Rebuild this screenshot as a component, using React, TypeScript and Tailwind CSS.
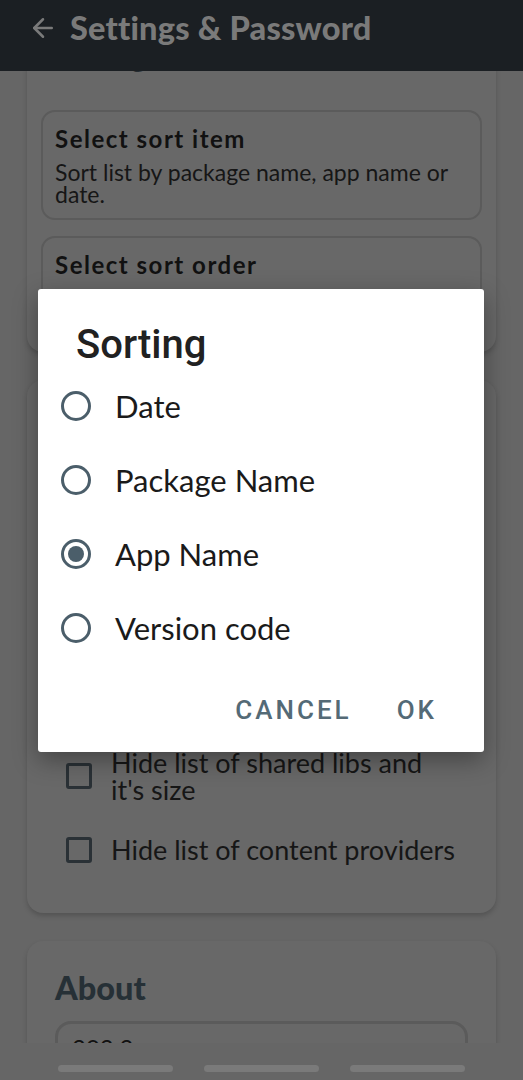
import React, { useState } from 'react';
import { ArrowLeft } from 'lucide-react';

const sortOptions = ['Date', 'Package Name', 'App Name', 'Version code'];

const hiddenToggles = [
  'Hide list of activities',
  'Hide list of services',
  'Hide list of receivers',
  'Hide list of permissions',
  'Hide list of shared libs and it\'s size',
  'Hide list of content providers',
];

const Checkbox = () => (
  <div className="h-[26px] w-[26px] shrink-0 rounded-[3px] border-[3px] border-[#2a3136]" />
);

const Radio = ({ checked }: { checked: boolean }) => (
  <div className="flex h-[30px] w-[30px] shrink-0 items-center justify-center rounded-full border-[3px] border-[#4b5e6a]">
    {checked && <div className="h-[16px] w-[16px] rounded-full bg-[#4b5e6a]" />}
  </div>
);

const App: React.FC = () => {
  const [selected, setSelected] = useState('App Name');

  return (
    <div
      className="relative h-[1080px] w-[523px] overflow-hidden bg-[#666666]"
      style={{ fontFamily: 'Lato, "Open Sans", sans-serif' }}
    >
      {/* App bar */}
      <header className="relative z-10 flex h-[71px] items-center gap-[12px] bg-[#1b1f23] pb-[15px] pl-[28px]">
        <ArrowLeft size={30} strokeWidth={2} className="text-[#7a7a7a]" />
        <h1 className="text-[32.5px] font-black leading-[40px] tracking-[0.2px] text-[#7a7a7a]">
          Settings &amp; Password
        </h1>
      </header>

      {/* Scrolled settings list */}
      <main className="-mt-[46px] flex flex-col gap-[28px] px-[27px]">
        <section className="rounded-[16px] bg-[#686868] px-[14px] pb-[28px] pt-[16px] shadow-[0_3px_5px_rgba(0,0,0,0.18)]">
          <h2 className="mb-[39px] pl-[14px] text-[28px] font-bold leading-[30px] text-[#252c31]">Sorting</h2>
          <div className="flex flex-col gap-[16px]">
            <div className="rounded-[14px] border-2 border-[#5b5b5b] px-[12px] pb-[13px] pt-[12px]">
              <p className="text-[24px] font-bold leading-[30px] tracking-[1.5px] text-[#111111]">Select sort item</p>
              <p className="mt-[7px] text-[23px] leading-[22px] text-[#161616]">
                Sort list by package name, app name or date.
              </p>
            </div>
            <div className="rounded-[14px] border-2 border-[#5b5b5b] px-[12px] pb-[13px] pt-[12px]">
              <p className="text-[24px] font-bold leading-[30px] tracking-[1.5px] text-[#111111]">Select sort order</p>
              <p className="mt-[7px] text-[23px] leading-[22px] text-[#161616]">Ascending or descending.</p>
            </div>
          </div>
        </section>

        <section className="flex h-[533px] flex-col justify-end gap-[33px] overflow-hidden rounded-[16px] bg-[#686868] pb-[50px] pl-[39px] shadow-[0_3px_5px_rgba(0,0,0,0.18)]">
          {hiddenToggles.map((label) => (
            <div key={label} className="flex items-center gap-[19px]">
              <Checkbox />
              <span className="w-[348px] text-[27px] leading-[27px] text-[#161616]">{label}</span>
            </div>
          ))}
        </section>

        <section className="rounded-[16px] bg-[#686868] px-[28px] pb-[40px] pt-[29px] shadow-[0_3px_5px_rgba(0,0,0,0.18)]">
          <h2 className="mb-[15px] text-[32.5px] font-black leading-[36px] text-[#263036]">About</h2>
          <div className="h-[120px] rounded-[16px] border-[3px] border-[#5b5b5b] px-[14px] pt-[9px]">
            <p className="text-[24px] leading-[30px] text-[#111111]">202.2</p>
          </div>
        </section>
      </main>

      {/* System navigation strip */}
      <div className="absolute inset-x-0 bottom-0 flex h-[37px] items-start justify-center gap-[31px] bg-[#666666] pt-[22px]">
        <div className="h-[7px] w-[115px] rounded-full bg-[#7a7a7a]" />
        <div className="h-[7px] w-[115px] rounded-full bg-[#7a7a7a]" />
        <div className="h-[7px] w-[115px] rounded-full bg-[#7a7a7a]" />
      </div>

      {/* Sorting dialog */}
      <div className="absolute left-[38px] top-[289px] z-20 w-[446px] rounded-[3px] bg-white shadow-[0_8px_24px_rgba(0,0,0,0.35)]">
        <h3
          className="mb-[2px] pl-[38px] pt-[34px] text-[40px] font-medium leading-[44px] text-[#212121]"
          style={{ fontFamily: 'Roboto, sans-serif' }}
        >
          Sorting
        </h3>
        <div className="flex flex-col">
          {sortOptions.map((opt) => (
            <button
              key={opt}
              onClick={() => setSelected(opt)}
              className="flex h-[74px] items-center gap-[24px] pl-[23px] text-left"
            >
              <Radio checked={selected === opt} />
              <span className="text-[31px] text-[#1a1a1a]">{opt}</span>
            </button>
          ))}
        </div>
        <div
          className="mt-[22px] flex h-[46px] items-center justify-end gap-[45px] pr-[47px]"
          style={{ fontFamily: 'Roboto, sans-serif' }}
        >
          <button className="text-[26px] font-medium tracking-[3px] text-[#546a76]">CANCEL</button>
          <button className="text-[26px] font-medium tracking-[3px] text-[#546a76]">OK</button>
        </div>
        <div className="h-[19px]" />
      </div>
    </div>
  );
};

export default App;
